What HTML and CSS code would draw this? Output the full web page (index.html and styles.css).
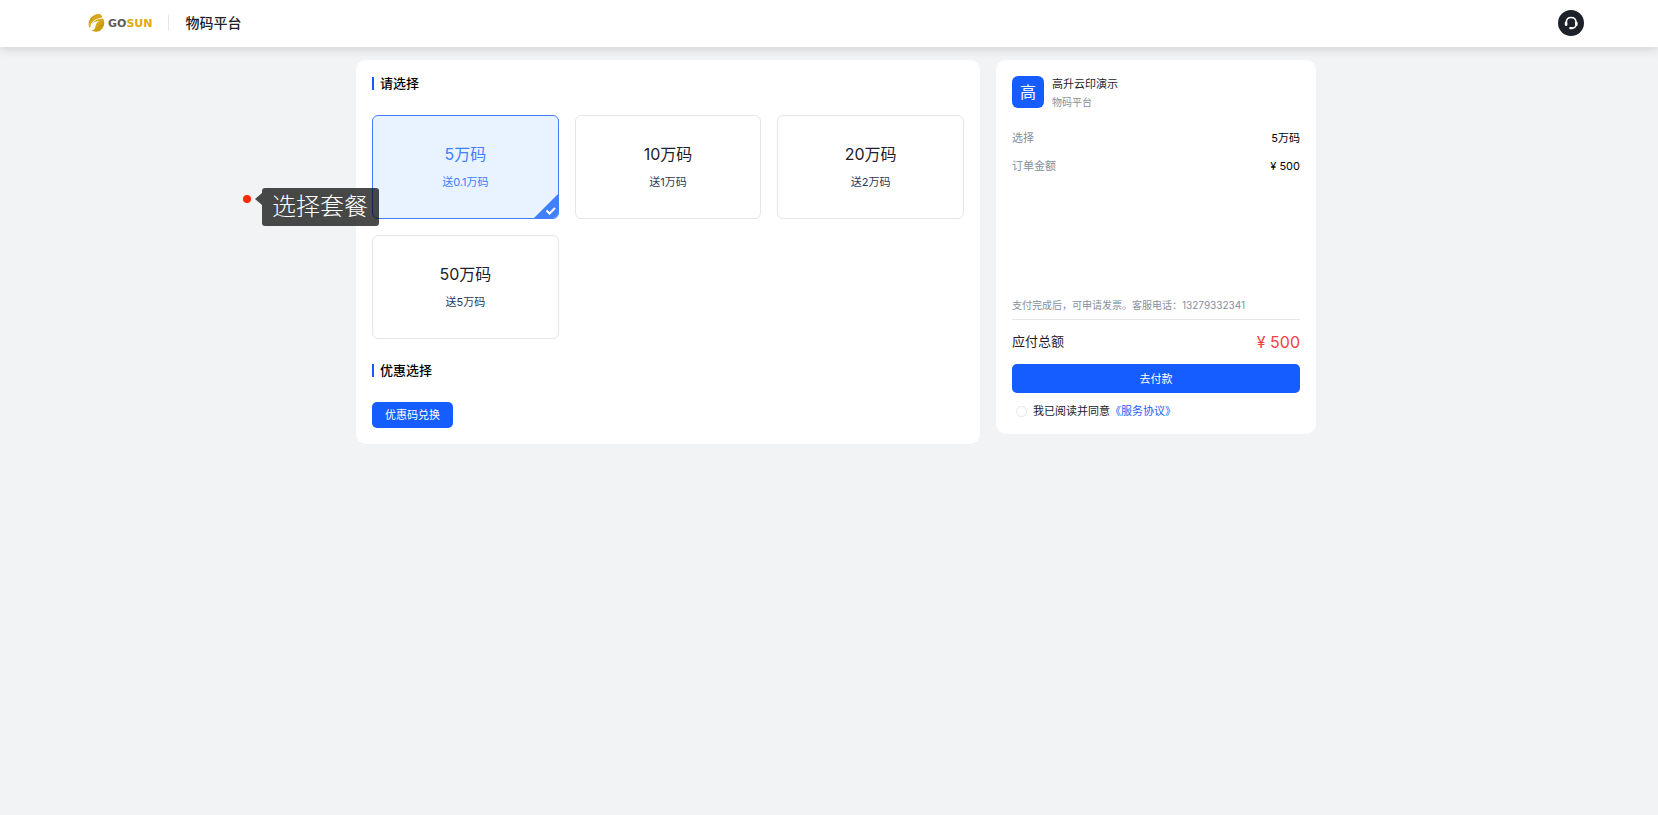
FILE: index.html
```html
<!DOCTYPE html>
<html lang="zh-CN">
<head>
<meta charset="utf-8">
<meta name="viewport" content="width=device-width, initial-scale=1">
<title>物码平台</title>
<link rel="stylesheet" href="styles.css">
</head>
<body>
<header class="topbar">
  <div class="brand">
    <svg class="brand-mark" viewBox="0 0 18 20" aria-hidden="true">
      <defs>
        <linearGradient id="gold" x1="0" y1="0" x2="1" y2="1">
          <stop offset="0" stop-color="#a97c0c"/>
          <stop offset=".4" stop-color="#dcae1a"/>
          <stop offset=".7" stop-color="#c8980f"/>
          <stop offset="1" stop-color="#f3d24b"/>
        </linearGradient>
      </defs>
      <path fill="url(#gold)" d="M1 9C2 4 7 .5 12 .3c1.500.8 2.800 2 3.300 3.600C10 5 4.500 7 2.800 12.200L2.200 15.500C.6 14 .2 11.500 1 9z"/>
      <path fill="url(#gold)" d="M16 5.200c1.700 2.800 1.700 7.100-.4 10.300-2.700 4-8.500 4.800-12 2.300 3.600-.3 4-2.500 4.600-5.300.5-2.400 1.600-3.600 3.800-4.200-3.200-.6-6.200.3-7.600 3.200C6 7.500 10 5.500 16 5.200z"/>
    </svg>
    <span class="brand-text">GO<span class="brand-sun">SUN</span></span>
  </div>
  <h1 class="platform">物码平台</h1>
  <button class="support" type="button" aria-label="客服">
    <svg viewBox="0 0 26 26" fill="none" stroke="#fff" aria-hidden="true">
      <path d="M8.300 12.500C8.300 9.300 10.300 7.500 13.100 7.500s4.900 1.800 4.900 5" stroke-width="1.500"/>
      <path d="M8.100 12.700v2.100M18.300 12.700v2.100" stroke-width="2.600" stroke-linecap="round"/>
      <path d="M18 15.500c-.5 1.600-1.800 2.600-3.600 2.700" stroke-width="1.300"/>
      <path d="M12.200 18.100h1.800" stroke-width="2.200" stroke-linecap="round"/>
    </svg>
  </button>
</header>

<main class="page">
  <section class="card picker">
    <h2 class="section-title">请选择</h2>
    <div class="plans">
      <button class="plan plan-active" type="button" aria-pressed="true">
        <span class="plan-name">5万码</span>
        <span class="plan-gift">送0.1万码</span>
        <svg class="plan-tick" viewBox="0 0 24 24" aria-hidden="true">
          <path d="M24 0v24H0z" fill="#4080ff"/>
          <path d="M12.500 16.500l3 3 5.500-5.500" fill="none" stroke="#fff" stroke-width="2"/>
        </svg>
      </button>
      <button class="plan" type="button">
        <span class="plan-name">10万码</span>
        <span class="plan-gift">送1万码</span>
      </button>
      <button class="plan" type="button">
        <span class="plan-name">20万码</span>
        <span class="plan-gift">送2万码</span>
      </button>
      <button class="plan" type="button">
        <span class="plan-name">50万码</span>
        <span class="plan-gift">送5万码</span>
      </button>
    </div>
    <h2 class="section-title">优惠选择</h2>
    <button class="primary redeem" type="button">优惠码兑换</button>
  </section>

  <aside class="card order">
    <div class="account">
      <span class="avatar">高</span>
      <div>
        <div class="account-name">高升云印演示</div>
        <div class="account-app">物码平台</div>
      </div>
    </div>
    <dl class="details">
      <div class="detail"><dt>选择</dt><dd>5万码</dd></div>
      <div class="detail"><dt>订单金额</dt><dd>¥ 500</dd></div>
    </dl>
    <p class="note">支付完成后，可申请发票。客服电话：13279332341</p>
    <div class="total">
      <span>应付总额</span>
      <span class="total-price">¥ 500</span>
    </div>
    <button class="primary pay" type="button">去付款</button>
    <div class="agree">
      <input class="agree-radio" type="radio" id="agree">
      <label for="agree">我已阅读并同意</label><a href="#terms">《服务协议》</a>
    </div>
  </aside>

  <div class="guide">
    <span class="guide-dot"></span>
    <span class="guide-label">选择套餐</span>
  </div>
</main>
</body>
</html>
```

FILE: styles.css
```css
* {
  box-sizing: border-box;
}

body {
  margin: 0;
  min-height: 100vh;
  background: #f1f3f5;
  color: #1d2129;
  font: 11px/16px Inter, "Noto Sans CJK SC", sans-serif;
}

button {
  padding: 0;
  border: 0;
  font: inherit;
  color: inherit;
  cursor: pointer;
}

h1, h2, p, dl, dd {
  margin: 0;
}

a {
  color: #165dff;
  text-decoration: none;
}

.topbar {
  display: flex;
  align-items: center;
  height: 47px;
  padding: 0 74px 2px 88px;
  background: #fff;
  box-shadow: 0 2px 10px rgba(0, 0, 0, 0.15);
}

.brand {
  display: flex;
  align-items: center;
  gap: 3px;
  height: 16px;
  padding-right: 16px;
  border-right: 1px solid #e5e6eb;
}

.brand-mark {
  width: 17px;
  height: 20px;
}

.brand-text {
  padding-top: 3px;
  color: #5c5c5c;
  font: bold 11px/16px "DejaVu Sans", sans-serif;
}

.brand-sun {
  color: #deaa10;
}

.platform {
  margin-left: 16px;
  font-size: 14px;
  font-weight: 500;
  line-height: 20px;
}

.support {
  width: 26px;
  height: 26px;
  margin-left: auto;
  border-radius: 50%;
  background: #1d2129;
}

.support svg {
  display: block;
}

.page {
  position: relative;
  display: flex;
  align-items: flex-start;
  justify-content: center;
  gap: 16px;
  padding: 13px 0 16px 14px;
}

.card {
  padding: 16px;
  border-radius: 10px;
  background: #fff;
}

.picker {
  width: 624px;
}

.section-title {
  display: flex;
  align-items: center;
  gap: 6px;
  height: 14px;
  color: #000;
  font-size: 13px;
  font-weight: 500;
  line-height: 12px;
}

.section-title::before {
  content: "";
  width: 2px;
  height: 13px;
  background: #165dff;
}

.plans {
  display: grid;
  grid-template-columns: repeat(3, 1fr);
  gap: 16px;
  margin: 25px 0 24px;
}

.plan {
  position: relative;
  display: flex;
  flex-direction: column;
  align-items: center;
  gap: 8px;
  height: 104px;
  padding-top: 26px;
  border: 1px solid #e5e6eb;
  border-radius: 6px;
  background: #fff;
}

.plan-name {
  font-size: 16px;
  line-height: 24px;
}

.plan-gift {
  color: #2b3a55;
}

.plan-active {
  border-color: #4080ff;
  background: #e8f3ff;
}

.plan-active .plan-name,
.plan-active .plan-gift {
  color: #4080ff;
}

.plan-tick {
  position: absolute;
  right: 0;
  bottom: 0;
  width: 24px;
  height: 24px;
  border-bottom-right-radius: 5px;
}

.primary {
  border-radius: 5px;
  background: #165dff;
  color: #fff;
}

.redeem {
  display: block;
  height: 26px;
  margin-top: 25px;
  padding: 0 13px;
}

.order {
  display: flex;
  flex-direction: column;
  width: 320px;
  min-height: 374px;
}

.account {
  display: flex;
  gap: 8px;
  height: 32px;
}

.avatar {
  width: 32px;
  height: 32px;
  border-radius: 6px;
  background: #165dff;
  color: #fff;
  font-size: 16px;
  line-height: 32px;
  text-align: center;
}

.account-name {
  line-height: 16px;
}

.account-app {
  margin-top: 3px;
  color: #86909c;
  font-size: 10px;
  line-height: 15px;
}

.details {
  display: flex;
  flex-direction: column;
  gap: 12px;
  margin-top: 22px;
}

.detail {
  display: flex;
  justify-content: space-between;
}

.detail dt {
  color: #86909c;
}

.detail dd {
  color: #000;
}

.note {
  margin-top: auto;
  padding-bottom: 6px;
  border-bottom: 1px solid #e5e6eb;
  color: #86909c;
  font-size: 10px;
}

.total {
  display: flex;
  justify-content: space-between;
  margin: 10px 0;
  font-size: 13px;
  line-height: 22px;
}

.total-price {
  color: #f53f3f;
  font-size: 16px;
  line-height: 24px;
}

.pay {
  width: 100%;
  height: 29px;
}

.agree {
  display: flex;
  align-items: center;
  margin: 10px 0 -1px 4px;
}

.agree-radio {
  width: 11px;
  height: 11px;
  margin: 0 6px 0 0;
  border: 1px solid #e5e6eb;
  border-radius: 50%;
  background: #fff;
  appearance: none;
}

.agree-radio:checked {
  border: 3px solid #165dff;
}

/* Onboarding pointer floating over the plan list */
.guide {
  position: absolute;
  top: 141px;
  left: calc(50% - 586px);
  display: flex;
  gap: 11px;
}

.guide-dot {
  width: 8px;
  height: 8px;
  margin-top: 7px;
  border-radius: 50%;
  background: #ff2a00;
}

.guide-label {
  position: relative;
  padding: 0 11px 0 10px;
  border-radius: 3px;
  background: rgba(0, 0, 0, 0.71);
  color: #fff;
  font-size: 24px;
  font-weight: 300;
  line-height: 38px;
}

.guide-label::before {
  content: "";
  position: absolute;
  top: 5px;
  left: -7px;
  border: 6px solid transparent;
  border-right: 7px solid rgba(0, 0, 0, 0.71);
  border-left: 0;
}
```
